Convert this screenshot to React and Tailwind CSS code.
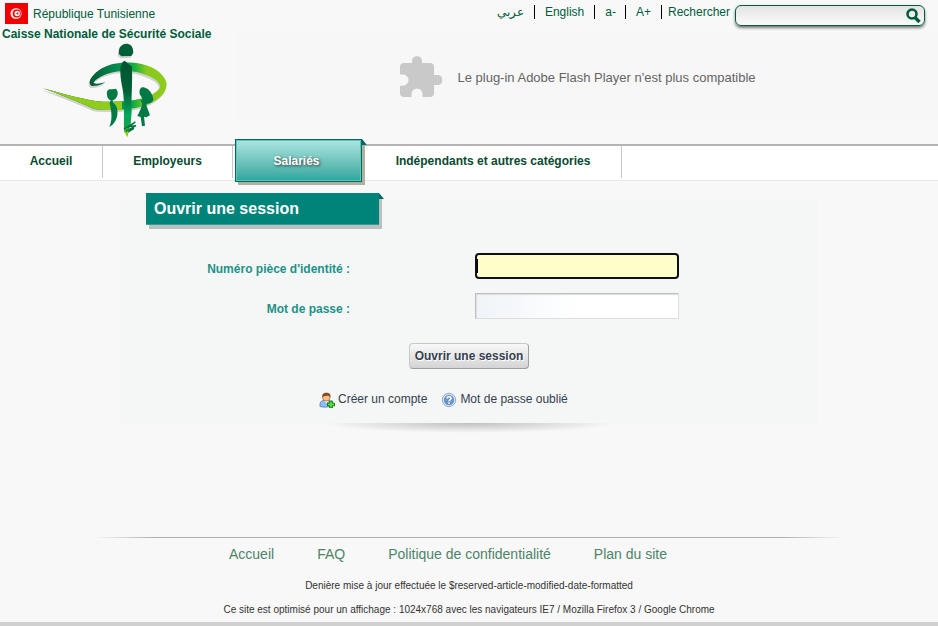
const topLinks = [
  { label: 'عربي', lang: 'ar', className: 'pl-2 pr-2.5' },
  { label: 'English', lang: 'en', className: 'px-2.5' },
  { label: 'a-', className: 'pl-2.5 pr-[9px]' },
  { label: 'A+', className: 'px-2.5' },
]

const footerLinks = ['Accueil', 'FAQ', 'Politique de confidentialité', 'Plan du site']

function Flag() {
  return (
    <svg className="w-[23px] h-[21px]" viewBox="0 0 23 21" aria-hidden="true">
      <rect width="23" height="21" fill="#f00000" />
      <circle cx="11" cy="10.5" r="5.6" fill="#fbd5d5" />
      <circle cx="11.8" cy="10.5" r="4" fill="#f00000" />
      <circle cx="12.2" cy="10.5" r="2.7" fill="#fff" />
      <path d="M11.2 10.5h2M12.800 9v3" stroke="#f00000" strokeWidth=".8" />
    </svg>
  )
}

function Logo() {
  return (
    <svg className="w-[140px] h-[100px] ml-9 -mt-0.5" viewBox="0 0 420 300" role="img" aria-label="CNSS">
      <defs>
        <linearGradient id="ring" x1="160" x2="390" y1="0" y2="0" gradientUnits="userSpaceOnUse">
          <stop offset="0" stopColor="#005a32" />
          <stop offset="0.35" stopColor="#008a50" />
          <stop offset="0.58" stopColor="#10b040" />
          <stop offset="0.74" stopColor="#86c81e" />
          <stop offset="1" stopColor="#8fcc1c" />
        </linearGradient>
        <linearGradient id="body" x1="0" x2="0" y1="62" y2="290" gradientUnits="userSpaceOnUse">
          <stop offset="0" stopColor="#00552f" />
          <stop offset="0.4" stopColor="#006037" />
          <stop offset="0.72" stopColor="#00a85a" />
          <stop offset="0.88" stopColor="#1da045" />
          <stop offset="1" stopColor="#8fcc1c" />
        </linearGradient>
        <filter id="soft" x="-10%" y="-10%" width="120%" height="120%">
          <feDropShadow dx="-3" dy="6" stdDeviation="2" floodColor="#888" floodOpacity="0.35" />
        </filter>
      </defs>
      <g filter="url(#soft)">
        <path
          d="M20 145C62 156 105 169 148 177C180 186 220 187 262 184C308 181 357 169 372 142C374 124 349 110 320 101C290 92 255 90 220 100C195 108 174 122 173 129C181 133 192 130 208 127C200 133 184 139 168 138C151 130 166 105 194 87C220 71 254 65 292 68C338 71 381 93 391 127C397 157 366 184 326 197C283 211 220 212 174 207C143 193 75 164 20 145Z"
          fill="url(#ring)"
        />
        <path d="M20 145C62 156 105 169 148 177C180 186 220 187 258 184L258 209C226 211 198 210 174 207C143 193 75 164 20 145Z" fill="#8fcc1c" />
        <path d="M249 35C248 21 258 12 270 11C282 11 291 19 291 31L292 38L286 48L256 49L248 41Z" fill="#005f37" />
      </g>
      <path d="M254 80L260 66L266 62L274 69L288 80C290 126 285 174 287 216L284 252L274 290L264 273C263 218 267 174 257 133C253 107 252 90 254 80Z" fill="url(#body)" />
      <path d="M213 164C211 151 218 146 228 148L240 146C248 155 247 170 235 179L230 181L231 188C242 194 246 208 244 224C242 239 233 254 220 261C229 242 228 218 221 190L224 181C217 178 213 172 213 164Z" fill="#007a45" />
      <path d="M311 162C309 148 314 141 322 142C337 144 348 158 352 177C351 187 342 191 333 191L331 196L342 226L331 232L324 230L327 257L318 259L314 231L304 228C310 216 316 204 319 192L314 180L320 178Z" fill="#007a45" />
      <path d="M264 267L298 246L280 260L300 257L266 276L294 265L274 277" fill="none" stroke="#007040" strokeWidth="4" />
      <path d="M264 270L272 277L278 268L274 291Z" fill="#8fcc1c" />
    </svg>
  )
}

function Puzzle() {
  return (
    <svg className="w-[42px] h-[42px]" viewBox="0 0 42 42" fill="#c9c9c9" aria-hidden="true">
      <path d="M38.3 20H34V12a4 4 0 0 0-4-4h-8V5.300a5.100 5.100 0 0 0-10 0V8H4a4 4 0 0 0-4 4v7.500h3a5.600 5.600 0 0 1 0 11.200H0V38a4 4 0 0 0 4 4h7.500v-3a5.500 5.500 0 0 1 11 0v3H30a4 4 0 0 0 4-4v-8h3a5 5 0 0 0 1.300-10z" />
    </svg>
  )
}

function UserAdd() {
  return (
    <svg className="w-4 h-4" viewBox="0 0 16 16" aria-hidden="true">
      <path d="M1 14.500C.5 10.500 2 8.600 5 8.300h4.500c2 .4 3.200 2 3 5.500-3.500 1.600-8 1.700-11.500.7z" fill="#8fbdf0" stroke="#4a80c8" strokeWidth=".8" />
      <path d="M5.300 8.800L7.300 11l2-2.200z" fill="#fff" />
      <circle cx="7.300" cy="5.400" r="3.700" fill="#f3c08e" stroke="#a8602c" strokeWidth=".7" />
      <path d="M3.400 5.600C2.600 2.400 4.500.8 7.300.8s5 1.400 4 4.800C10.500 4 9.500 3.600 8 3.800 6 4.200 4 3.800 3.400 5.600z" fill="#8a4a1c" />
      <path d="M10.700 9h2.600v2.200h2.200v2.600h-2.200V16h-2.600v-2.200H8.500v-2.600h2.200z" fill="#5fe036" stroke="#0b7a10" strokeWidth="1" />
    </svg>
  )
}

function Help() {
  return (
    <svg className="w-4 h-4" viewBox="0 0 16 16" aria-hidden="true">
      <circle cx="8" cy="8" r="6.700" fill="#dfe9f5" stroke="#8fabd0" />
      <circle cx="8" cy="8" r="5.200" fill="#6b95c9" />
      <path d="M6 6.500C6 4.200 10 4.200 10 6.500C10 7.900 8 7.800 8 9.300" fill="none" stroke="#fff" strokeWidth="1.500" />
      <rect x="7.200" y="10.300" width="1.600" height="1.500" fill="#fff" />
    </svg>
  )
}

function Header() {
  return (
    <header className="flex h-36">
      <div className="w-[236px] shrink-0 text-xs text-[#005c3c]">
        <div className="flex items-center gap-[5px] pl-[5px] pt-[3px]">
          <Flag />
          <span>République Tunisienne</span>
        </div>
        <h1 className="pl-0.5 font-bold leading-4 pt-0.5">Caisse Nationale de Sécurité Sociale</h1>
        <Logo />
      </div>

      <div className="flex-1">
        <div className="flex items-start justify-end h-8 pt-[5px] pr-[13px] text-xs text-[#005c3c]">
          <nav className="flex leading-[14px]">
            {topLinks.map(({ label, lang, className }) => (
              <a key={label} href="#" lang={lang} className={`h-[14px] border-r border-black whitespace-nowrap ${className}`}>
                {label}
              </a>
            ))}
          </nav>
          <label htmlFor="search" className="pl-1.5 pr-[5px] leading-[14px]">Rechercher</label>
          <div className="flex items-center w-[190px] h-[21px] rounded-md border border-[#005c3c] bg-linear-to-b from-[#e4e4e4] to-[#fafafa] shadow-[0_2px_3px_#777] pr-[3px]">
            <input id="search" type="text" className="flex-1 min-w-0 h-full px-2 outline-none" />
            <button aria-label="Rechercher">
              <svg className="w-4 h-4" viewBox="0 0 16 16" fill="none" stroke="#005c3c" aria-hidden="true">
                <circle cx="7" cy="6" r="4.500" strokeWidth="2.600" />
                <path d="M10 9.500l4.500 4.500" strokeWidth="3.400" />
              </svg>
            </button>
          </div>
        </div>
        <div className="flex items-center justify-center gap-[15px] h-[90px] pb-0.5 pr-[18px] bg-[#f7f7f7] text-[13px] text-[#646464]">
          <Puzzle />
          <span className="pt-[3px]">Le plug-in Adobe Flash Player n'est plus compatible</span>
        </div>
      </div>
    </header>
  )
}

function MainNav() {
  return (
    <nav className="flex h-[37px] border-t-2 border-t-[#b4b4b4] border-b border-b-[#e8e8e8] bg-white text-xs font-bold text-[#0a4a30]">
      <a href="#" className="w-[103px] h-8 pt-px leading-7 text-center border-r border-[#c8c8c8]">Accueil</a>
      <a href="#" className="w-[130px] h-8 pt-px leading-7 text-center border-r border-[#c8c8c8]">Employeurs</a>
      <a
        href="#"
        className="relative -mt-[7px] ml-0.5 w-[127px] h-[43px] pr-1 leading-[42px] text-center text-white border border-[#00695f] bg-linear-to-b from-[#ace5e1] to-[#27a79d] shadow-[inset_0_0_0_1px_#62c4bb,3px_3px_0_#acb1a0] [text-shadow:1px_1px_3px_#333]"
      >
        Salariés
        <span className="absolute -top-px -right-[6px] w-[5px] h-1.5 bg-[#f8f8f8]">
          <span className="block w-full h-full bg-[#00695f] [clip-path:polygon(0_0,100%_100%,0_100%)]" />
        </span>
      </a>
      <a href="#" className="w-[260px] h-8 pt-px pl-[3px] leading-7 text-center border-r border-[#c8c8c8]">Indépendants et autres catégories</a>
    </nav>
  )
}

function Login() {
  return (
    <main className="w-[698px] max-w-full mx-auto mt-5">
      <form className="h-[222px] bg-[#f5f7f6] text-xs" onSubmit={(e) => e.preventDefault()}>
        <h2 className="relative -top-2 ml-[26px] w-[233px] h-8 pl-2 text-base font-bold leading-[31px] text-white bg-[#008479] border-b border-[#2f9e94] shadow-[3px_4px_0_#bdbfbe]">
          Ouvrir une session
          <span className="absolute top-0 -right-[5px] w-[5px] h-1.5 bg-[#f8f8f8]">
            <span className="block w-full h-full bg-[#00695f] [clip-path:polygon(0_0,100%_100%,0_100%)]" />
          </span>
        </h2>

        <div className="grid grid-cols-[230px_204px] gap-x-[125px] gap-y-3.5 pt-5 items-center font-bold text-[#1e9188]">
          <label htmlFor="ident" className="text-right pt-1.5">Numéro pièce d'identité :</label>
          <div className="relative flex">
            <input id="ident" type="text" className="w-full h-[26px] px-px rounded-[4px] border-2 border-[#101010] bg-[#ffffcc] caret-transparent outline-none" autoFocus />
            <span className="absolute left-0.5 top-1.5 w-px h-3.5 bg-black" />
          </div>
          <label htmlFor="password" className="text-right pt-1.5">Mot de passe :</label>
          <input
            id="password"
            type="password"
            className="h-[26px] px-1 border border-t-[#bfbfbf] border-l-[#bfbfbf] border-r-[#dedede] border-b-[#dedede] bg-linear-to-r from-[#eff4f8] to-white to-50% shadow-[inset_1px_1px_1px_#ddd] outline-none"
          />
        </div>

        <div className="flex justify-center pt-6">
          <button className="h-[26px] w-[120px] rounded-[4px] border border-t-[#c8c8c8] border-l-[#c8c8c8] border-r-[#9e9e9e] border-b-[#9e9e9e] bg-linear-to-b from-[#f8f8f8] to-[#d4d4d4] font-bold text-[#34404f] [text-shadow:1px_1px_#fff] whitespace-nowrap">
            Ouvrir une session
          </button>
        </div>

        <div className="flex pl-[199px] pt-[22px] gap-3.5 text-[#34404f]">
          <a href="#" className="flex gap-[3px] leading-4"><span className="pt-px"><UserAdd /></span>Créer un compte</a>
          <a href="#" className="flex gap-[3px] leading-4"><span className="pt-px"><Help /></span>Mot de passe oublié</a>
        </div>
      </form>
      <div className="w-[300px] h-2.5 mx-auto bg-[radial-gradient(ellipse_at_top,#c0c0c0,#f8f8f8_70%)]" />
    </main>
  )
}

function Footer() {
  return (
    <footer className="mt-[104px] text-center border-b-4 border-[#d0d0d0]">
      <div className="h-px w-[750px] max-w-full mx-auto bg-[linear-gradient(to_right,transparent,#b0b0b0_8%,#b0b0b0_92%,transparent)]" />
      <nav className="flex justify-center gap-[43px] pt-1.5 pr-[42px] text-sm text-[#4d8368]">
        {footerLinks.map((label) => (
          <a key={label} href="#">{label}</a>
        ))}
      </nav>
      <p className="pt-3.5 text-[10px] leading-4 text-[#333]">Denière mise à jour effectuée le $reserved-article-modified-date-formatted</p>
      <p className="pt-2 pb-1 text-[10px] leading-4 text-[#333]">
        Ce site est optimisé pour un affichage : 1024x768 avec les navigateurs IE7 / Mozilla Firefox 3 / Google Chrome
      </p>
    </footer>
  )
}

export default function App() {
  return (
    <div className="min-h-screen bg-[#f8f8f8] font-['Liberation_Sans',Arial,sans-serif]">
      <Header />
      <MainNav />
      <Login />
      <Footer />
    </div>
  )
}
